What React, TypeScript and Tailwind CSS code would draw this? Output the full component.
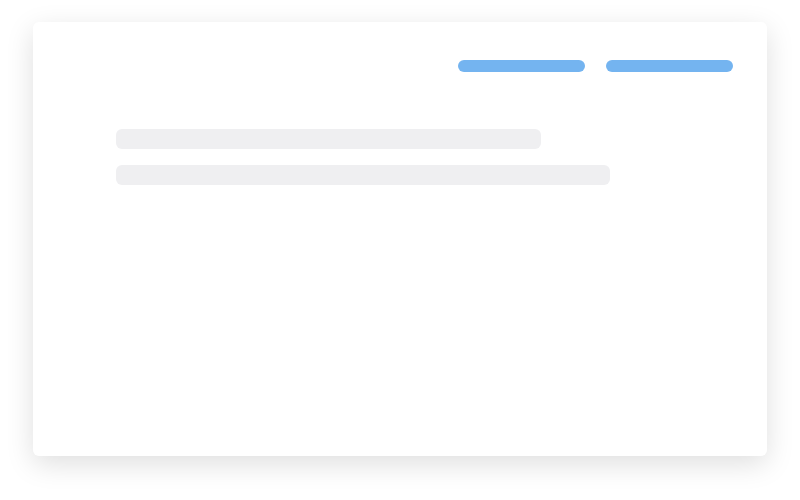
export default function App() {
  return (
    <div className="h-[500px] w-[800px] bg-white pt-[22px] px-[33px]">
      <div className="h-[434px] w-[734px] rounded-md bg-white shadow-[0_8px_28px_rgba(0,0,0,0.13)]">
        {/* header pills */}
        <div className="flex justify-end gap-[21px] pt-[38px] pr-[34px]">
          <div className="h-[12px] w-[127px] rounded-full bg-[#74b4f0]" />
          <div className="h-[12px] w-[127px] rounded-full bg-[#74b4f0]" />
        </div>

        {/* placeholder lines */}
        <div className="mt-[57px] ml-[83px] flex flex-col gap-[16px]">
          <div className="h-[20px] w-[425px] rounded-md bg-[#efeff1]" />
          <div className="h-[20px] w-[494px] rounded-md bg-[#efeff1]" />
        </div>
      </div>
    </div>
  );
}
